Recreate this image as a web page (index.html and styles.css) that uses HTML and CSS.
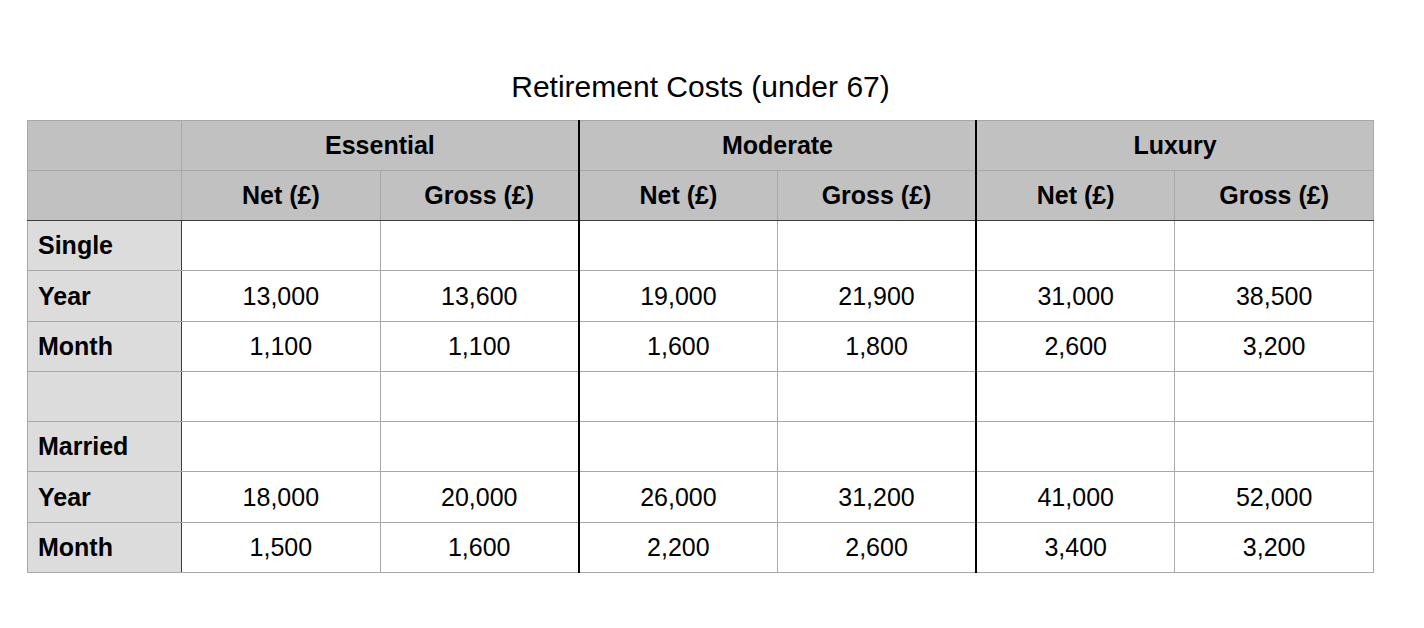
FILE: index.html
```html
<!DOCTYPE html>
<html lang="en">
<head>
<meta charset="utf-8">
<title>Retirement Costs (under 67)</title>
<link rel="stylesheet" href="styles.css">
</head>
<body>
<main class="page">
  <h1 class="title">Retirement Costs (under 67)</h1>
  <table class="costs">
    <colgroup>
      <col class="col-label">
      <col class="col-data"><col class="col-data">
      <col class="col-data"><col class="col-data">
      <col class="col-data"><col class="col-data">
    </colgroup>
    <thead>
      <tr class="band">
        <th class="corner"></th>
        <th class="group" colspan="2">Essential</th>
        <th class="group split" colspan="2">Moderate</th>
        <th class="group split" colspan="2">Luxury</th>
      </tr>
      <tr class="sub">
        <th class="corner"></th>
        <th>Net (£)</th><th>Gross (£)</th>
        <th class="split">Net (£)</th><th>Gross (£)</th>
        <th class="split">Net (£)</th><th>Gross (£)</th>
      </tr>
    </thead>
    <tbody>
      <tr>
        <th class="label">Single</th>
        <td></td><td></td><td class="split"></td><td></td><td class="split"></td><td></td>
      </tr>
      <tr class="wide">
        <th class="label">Year</th>
        <td>13,000</td><td>13,600</td><td class="split">19,000</td><td>21,900</td><td class="split">31,000</td><td>38,500</td>
      </tr>
      <tr>
        <th class="label">Month</th>
        <td>1,100</td><td>1,100</td><td class="split">1,600</td><td>1,800</td><td class="split">2,600</td><td>3,200</td>
      </tr>
      <tr>
        <th class="label"></th>
        <td></td><td></td><td class="split"></td><td></td><td class="split"></td><td></td>
      </tr>
      <tr>
        <th class="label">Married</th>
        <td></td><td></td><td class="split"></td><td></td><td class="split"></td><td></td>
      </tr>
      <tr class="wide">
        <th class="label">Year</th>
        <td>18,000</td><td>20,000</td><td class="split">26,000</td><td>31,200</td><td class="split">41,000</td><td>52,000</td>
      </tr>
      <tr>
        <th class="label">Month</th>
        <td>1,500</td><td>1,600</td><td class="split">2,200</td><td>2,600</td><td class="split">3,400</td><td>3,200</td>
      </tr>
    </tbody>
  </table>
</main>
</body>
</html>
```

FILE: styles.css
```css
html, body {
  margin: 0;
  padding: 0;
  background: #ffffff;
}

body {
  font-family: "Liberation Sans", Arial, sans-serif;
  color: #000000;
}

.page {
  display: flex;
  flex-direction: column;
  align-items: center;
  width: 1347px;
  margin-left: 27px;
  padding-top: 70px;
}

.title {
  margin: 0 0 17px 0;
  font-size: 30px;
  line-height: 33px;
  font-weight: 400;
  text-align: center;
}

.costs {
  width: 1347px;
  table-layout: fixed;
  border-collapse: collapse;
  font-size: 25px;
}

.col-label {
  width: 154px;
}

.costs th,
.costs td {
  height: 49px;
  padding: 0 10px;
  border: 1px solid #a8a8a8;
  text-align: center;
  vertical-align: middle;
  white-space: nowrap;
}

.costs tbody tr.wide th,
.costs tbody tr.wide td {
  height: 50px;
}

.costs thead th {
  background: #c1c1c1;
  font-weight: 700;
}

.costs thead .sub th {
  border-bottom: 1px solid #3c3c3c;
}

.costs tbody th.label {
  background: #dcdcdc;
  font-weight: 700;
  text-align: left;
  padding-left: 10px;
  border-right: 1px solid #3c3c3c;
}

.costs td {
  background: #ffffff;
  font-weight: 400;
}

.costs .split {
  border-left: 2px solid #000000;
}
```
